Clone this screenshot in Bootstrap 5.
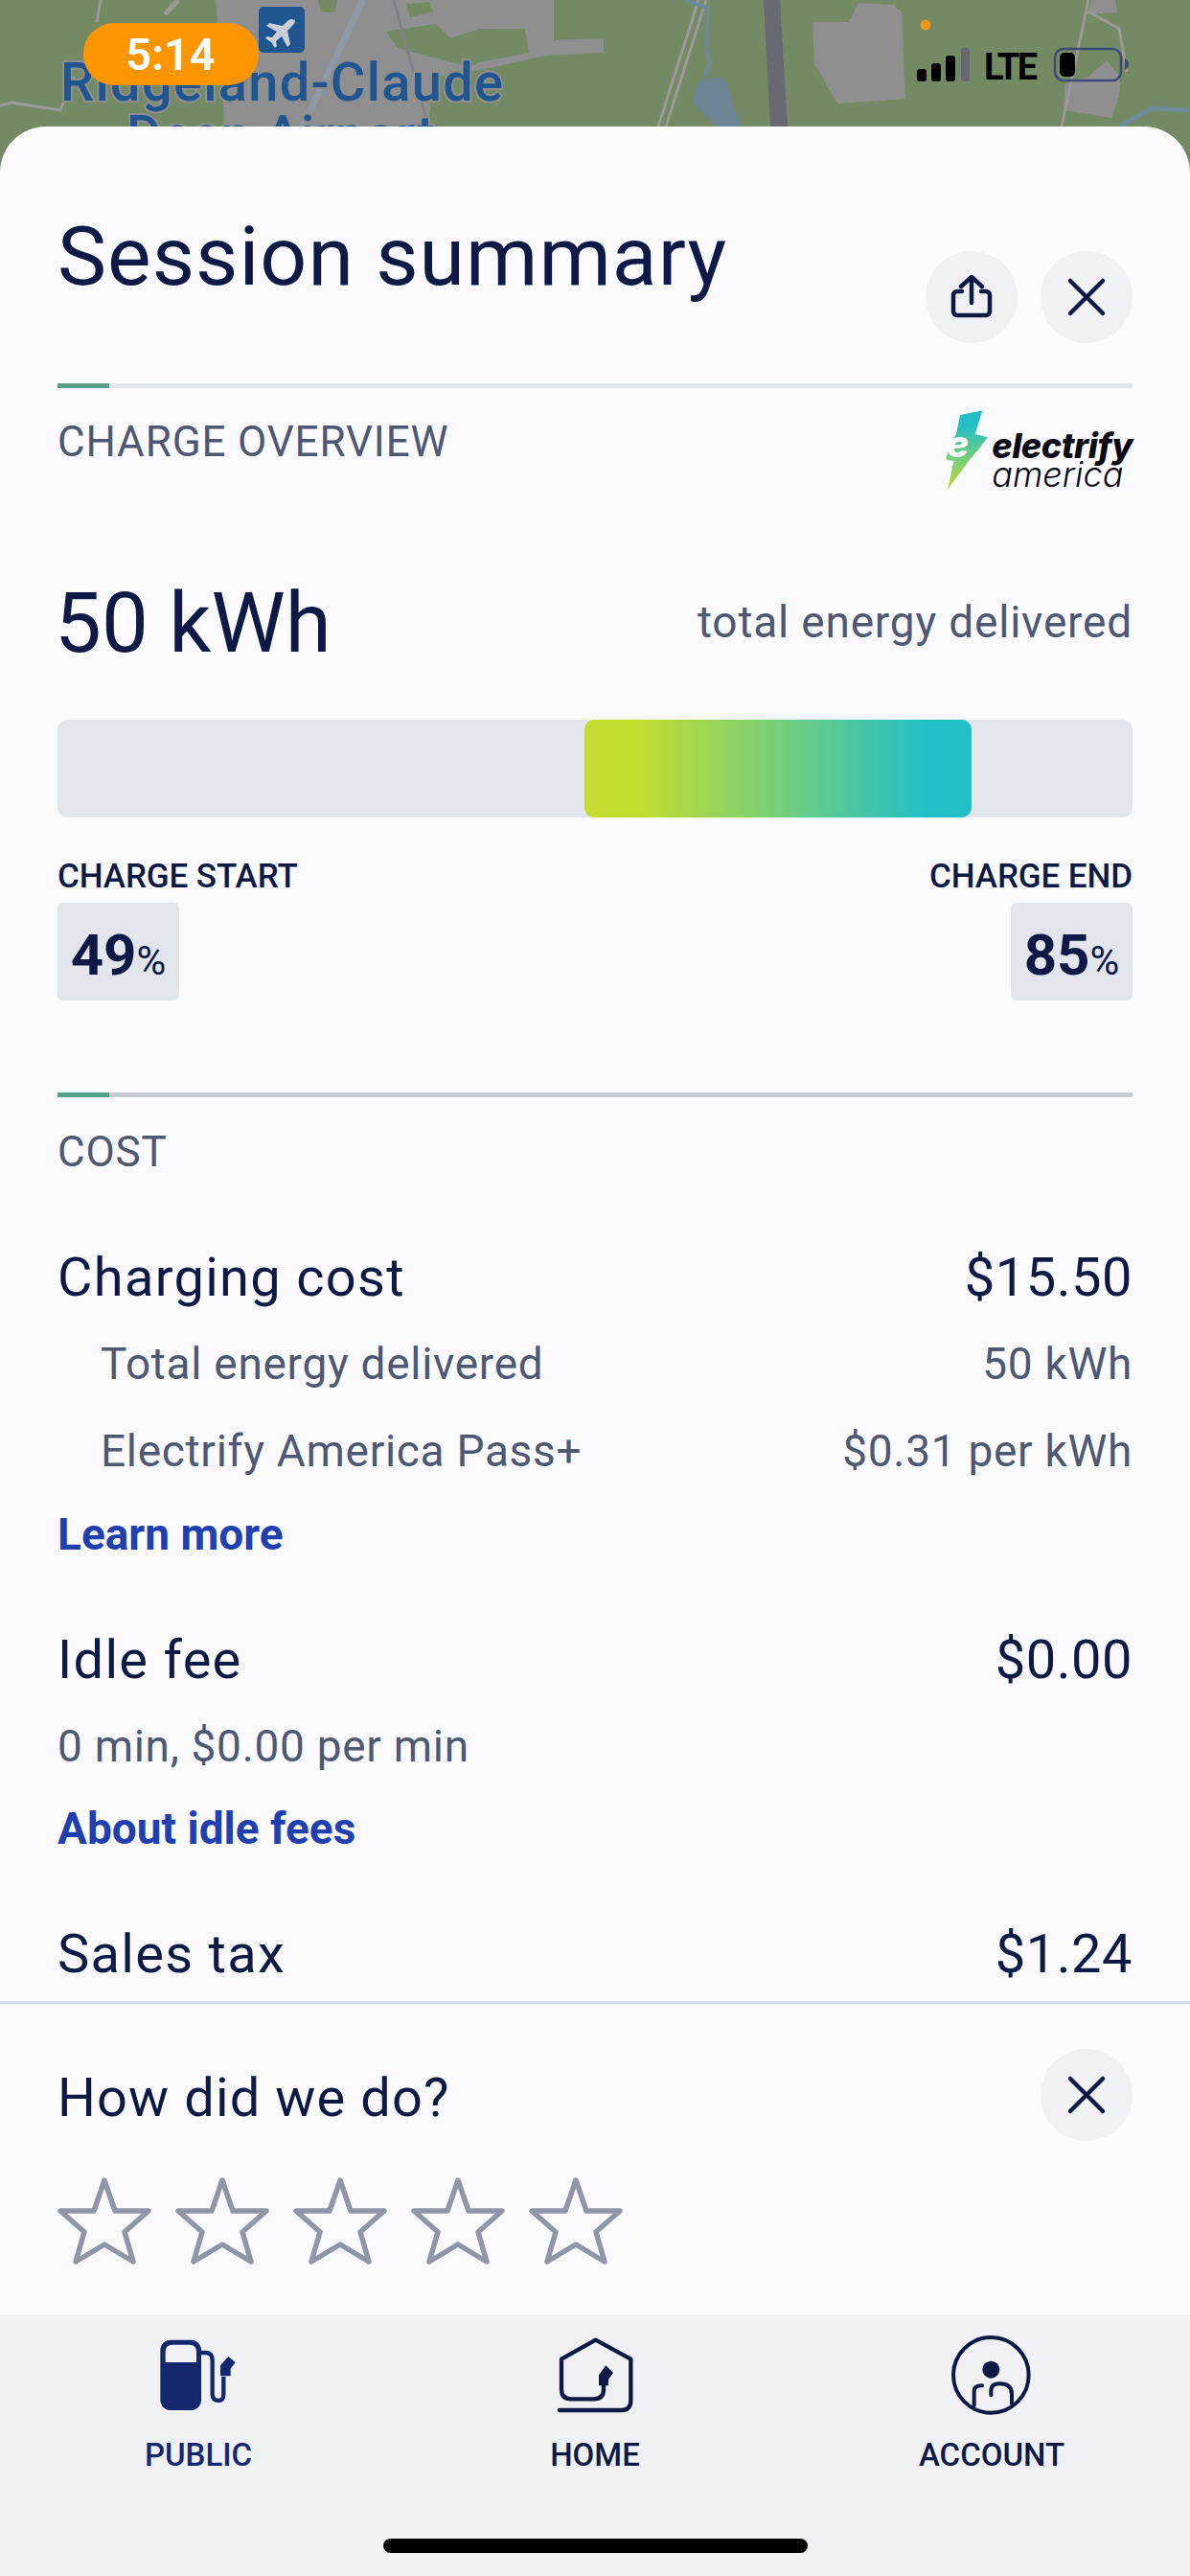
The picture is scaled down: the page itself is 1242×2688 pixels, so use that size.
<!DOCTYPE html>
<html lang="en">
<head>
  <meta charset="UTF-8">
  <title>Session summary</title>
  <link href="https://cdn.jsdelivr.net/npm/bootstrap@5.3.2/dist/css/bootstrap.min.css" rel="stylesheet">
  <style>
    html, body { margin: 0; background: #f0f1f4; }
    .phone { width: 1242px; height: 2688px; overflow: hidden; font-family: Roboto, "Liberation Sans", sans-serif; color: #0e1a45; background: #748a64; }
    .map-art { position: absolute; left: 0; top: 0; }
    .status-overlay { position: absolute; left: 0; top: 0; }
    .sheet { margin-top: 132px; background: #fbfbff; border-radius: 48px 48px 0 0; flex: 1 1 auto; min-height: 0; z-index: 1; }
    .scroll-part { height: 1956px; overflow: hidden; padding: 0 60px; }
    .head-row { height: 268px; }
    .page-title { font-size: 86px; line-height: 100px; padding-top: 86px; margin: 0; font-weight: 400; letter-spacing: 1px; }
    .head-btns { padding-top: 130px; gap: 24px; }
    .round-btn { width: 96px; height: 96px; border-radius: 50%; background: #f0f1f4; border: 0; padding: 0; }
    .rule-row { height: 5px; background: #e2e5ec; }
    .rule-row.darker { background: #c6cbd6; }
    .rule-tick { width: 54px; background: #5aa088; }
    .section-cap { font-size: 44px; line-height: 112px; color: #4f5873; letter-spacing: .85px; }
    .cost-cap { line-height: 114px; }
    .overview-row { height: 106px; }
    .ea-logo { margin-top: 23px; gap: 4px; }
    .ea-name { font-family: Inter, sans-serif; font-size: 36px; line-height: 36px; font-weight: 800; font-style: italic; color: #0a0a14; letter-spacing: -.5px; padding-top: 3px; }
    .ea-sub { font-family: Inter, sans-serif; font-size: 36px; line-height: 24px; font-weight: 300; font-style: italic; color: #0a0a14; }
    .energy-row { margin-top: 89px; line-height: 100px; }
    .energy-val { font-size: 87px; margin-left: -3px; }
    .energy-note { font-size: 46px; line-height: 98px; color: #4f5873; letter-spacing: .8px; }
    .charge-bar { height: 102px; margin-top: 51px; background: #e2e5ec; border-radius: 10px; }
    .charge-fill { border-radius: 10px; background: linear-gradient(90deg, #c3dc30 14%, #24bfc6 88%); }
    .charge-labels { margin-top: 42px; font-size: 35px; line-height: 40px; font-weight: 500; letter-spacing: -.1px; }
    .charge-boxes { margin-top: 7px; margin-bottom: 96px; }
    .pct-box { width: 127px; height: 102px; background: #e2e5ec; border-radius: 6px; font-size: 60px; font-weight: 700; line-height: 110px; text-align: center; white-space: nowrap; }
    .pct-box span { font-size: 42px; font-weight: 400; }
    .cost-main { font-size: 56px; line-height: 80px; letter-spacing: .5px; margin-top: 56px; }
    .cost-main.first-cost { margin-top: 34px; }
    .cost-main span:first-child { letter-spacing: 1.3px; }
    .cost-sub { font-size: 46px; line-height: 70px; color: #4f5873; letter-spacing: .7px; margin-top: 15px; }
    .cost-sub.indent { padding-left: 45px; }
    .cost-sub.wider-gap { margin-top: 21px; }
    .cost-link { display: block; font-size: 46px; line-height: 70px; font-weight: 700; color: #2040b0; text-decoration: none; margin-top: 16px; }
    .cost-sub.indent + .cost-link { margin-top: 17px; }
    .rating-part { border-top: 3px solid #d8ddee; padding: 47px 60px 0; height: 327px; }
    .rating-title { font-size: 56px; letter-spacing: 1.1px; margin-top: 6px; }
    .star-row { margin-top: 37px; gap: 25px; }
    .tab-bar { background: #f0f1f4; height: 273px; padding-top: 15px; }
    .tab-label { font-size: 33px; line-height: 40px; font-weight: 500; margin-top: 12px; }
    .tab-label.active-tab { color: #14276f; }
    .home-pill { width: 443px; height: 15px; border-radius: 8px; background: #000; margin: 67px auto 0; }
  </style>
</head>
<body>

<div class="phone position-relative d-flex flex-column">

  <!-- map behind the sheet -->
  <svg class="map-art" width="1242" height="190" viewBox="0 0 1242 190">
    <rect width="1242" height="190" fill="#748a64"/>
    <polygon points="225,0 578,0 578,42 630,40 630,55 570,58 507,72 451,80 443,190 238,190 233,113 230,60" fill="#8f8f90"/>
    <polygon points="403,33 455,25 470,40 500,30 548,30 552,55 500,65 490,70 415,50" fill="#748a64"/>
    <polygon points="332,0 352,0 350,13 335,12" fill="#748a64"/>
    <polygon points="424,4 448,2 452,12 428,18" fill="#748a64"/>
    <polygon points="848,23 886,23 896,3 933,5 941,13 945,103 874,108 858,80 850,67" fill="#8f8f90"/>
    <polygon points="1140,0 1164,0 1166,13 1134,15" fill="#8f8f90"/>
    <polygon points="1112,87 1136,80 1155,63 1169,80 1168,100 1160,123 1110,115" fill="#8f8f90"/>
    <polygon points="723,107 729,85 751,80 759,87 773,132 747,132" fill="#6f8494"/>
    <polygon points="797,0 814,0 822,132 804,132" fill="#676a73"/>
    <g fill="none" stroke="#9a9a9a" stroke-width="3">
      <path d="M737 0 695 132M729 0 687 132"/>
      <path d="M1136 0 1108 132M1136 12 1168 30 1176 75"/>
      <path d="M105 0 101 23M0 110 12 107 63 115 77 80"/>
    </g>
    <path d="M186 0 172 15" stroke="#9a9a9a" stroke-width="5" fill="none"/>
    <path d="M379 0 316 132" stroke="#8d9aa5" stroke-width="7" fill="none"/>
    <path d="M411 0 447 132" stroke="#7f8186" stroke-width="3" fill="none"/>
    <path d="M715 0 739 8 737 50 741 66 735 80" stroke="#6b8a95" stroke-width="4" fill="none"/>
    <path d="M1168 132 1203 113 1242 115" stroke="#6b8a95" stroke-width="5" fill="none"/>
    <rect x="270" y="7" width="48" height="48" rx="5" fill="#20558f"/>
    <path d="M307 21c-2-2-5-1-7 1l-5 5-14-3-3 3 11 6-5 6-5-1-2 2 6 4 4 6 2-2-1-5 6-5 6 11 3-3-3-14 5-5c2-2 4-5 2-7z" fill="#c9cdd5"/>
    <g font-family="Roboto, sans-serif" font-weight="500" font-size="56" fill="#20558f" stroke="#8f8f90" stroke-width="4" paint-order="stroke">
      <text x="63" y="105" textLength="462">Ridgeland-Claude</text>
      <text x="132" y="160" textLength="322">Deen Airport</text>
    </g>
  </svg>

  <!-- status bar drawn over the map -->
  <svg class="status-overlay" width="1242" height="132" viewBox="0 0 1242 132">
    <rect x="87" y="24" width="183" height="65" rx="32" fill="#fb9500"/>
    <text x="178" y="73" text-anchor="middle" font-family="Roboto, sans-serif" font-weight="600" font-size="47" fill="#fff">5:14</text>
    <circle cx="966" cy="26" r="5.5" fill="#e8951c"/>
    <rect x="957" y="72" width="10" height="13" rx="3"/>
    <rect x="972" y="66" width="10" height="19" rx="3"/>
    <rect x="987" y="58" width="10" height="27" rx="3"/>
    <rect x="1003" y="50" width="9" height="35" rx="3" fill="#666a70"/>
    <text x="1027" y="83" font-family="Roboto, sans-serif" font-weight="700" font-size="38" textLength="56">LTE</text>
    <rect x="1101" y="51" width="69" height="33" rx="9" fill="none" stroke="#3d4a75" stroke-width="2.5"/>
    <rect x="1106" y="55" width="16" height="25" rx="5"/>
    <path d="M1174 61c3 1 4 4 4 6s-1 5-4 6z" fill="#3d4a75"/>
  </svg>

  <div class="sheet position-relative d-flex flex-column">
    <div class="scroll-part">
      <div class="head-row d-flex justify-content-between align-items-start">
        <h1 class="page-title">Session summary</h1>
        <div class="head-btns d-flex">
          <button class="round-btn" type="button" aria-label="Share">
            <svg width="96" height="96" viewBox="0 0 96 96" fill="none" stroke="#0e1a45" stroke-width="4.5" stroke-linecap="round" stroke-linejoin="round">
              <path d="M38 42H33a4 4 0 0 0-4 4V63a4 4 0 0 0 4 4H63a4 4 0 0 0 4-4V46a4 4 0 0 0-4-4H58"/>
              <path d="M48 54V27M37 37 48 27 59 37"/>
            </svg>
          </button>
          <button class="round-btn" type="button" aria-label="Close">
            <svg width="96" height="96" viewBox="0 0 96 96" fill="none" stroke="#0e1a45" stroke-width="4.5" stroke-linecap="round">
              <path d="M31 31 65 65M65 31 31 65"/>
            </svg>
          </button>
        </div>
      </div>

      <div class="rule-row d-flex"><div class="rule-tick"></div></div>
      <div class="overview-row d-flex justify-content-between align-items-start">
        <div class="section-cap">CHARGE OVERVIEW</div>
        <div class="ea-logo d-flex">
          <svg width="44" height="83" viewBox="252 595 133 250">
            <defs>
              <linearGradient id="boltGrad" x1="0" y1="0" x2="0" y2="1">
                <stop offset="0.2" stop-color="#24bfc6"/>
                <stop offset="1" stop-color="#c3dc30"/>
              </linearGradient>
            </defs>
            <polygon points="298,610 368,595 345,670 385,680 350,725 325,755 258,845 278,755 252,750 272,690 285,670" fill="url(#boltGrad)"/>
            <text x="255" y="742" font-family="Inter, sans-serif" font-weight="800" font-style="italic" font-size="118" fill="#fbfbff">e</text>
          </svg>
          <div class="pt-3">
            <div class="ea-name">electrify</div>
            <div class="ea-sub">america</div>
          </div>
        </div>
      </div>

      <div class="energy-row d-flex justify-content-between">
        <div class="energy-val">50 kWh</div>
        <div class="energy-note">total energy delivered</div>
      </div>

      <div class="charge-bar d-flex">
        <div class="charge-fill" style="margin-left: 49%; width: 36%;"></div>
      </div>
      <div class="charge-labels d-flex justify-content-between">
        <div>CHARGE START</div>
        <div>CHARGE END</div>
      </div>
      <div class="charge-boxes d-flex justify-content-between">
        <div class="pct-box">49<span>%</span></div>
        <div class="pct-box">85<span>%</span></div>
      </div>

      <div class="rule-row darker d-flex"><div class="rule-tick"></div></div>
      <div class="section-cap cost-cap">COST</div>

      <div class="cost-main first-cost d-flex justify-content-between"><span>Charging cost</span><span>$15.50</span></div>
      <div class="cost-sub indent d-flex justify-content-between"><span>Total energy delivered</span><span>50 kWh</span></div>
      <div class="cost-sub wider-gap indent d-flex justify-content-between"><span>Electrify America Pass+</span><span>$0.31 per kWh</span></div>
      <a class="cost-link" href="#">Learn more</a>

      <div class="cost-main d-flex justify-content-between"><span>Idle fee</span><span>$0.00</span></div>
      <div class="cost-sub">0 min, $0.00 per min</div>
      <a class="cost-link" href="#">About idle fees</a>

      <div class="cost-main d-flex justify-content-between"><span>Sales tax</span><span>$1.24</span></div>
    </div>

    <div class="rating-part">
      <div class="d-flex justify-content-between align-items-center">
        <div class="rating-title">How did we do?</div>
        <button class="round-btn" type="button" aria-label="Dismiss">
          <svg width="96" height="96" viewBox="0 0 96 96" fill="none" stroke="#0e1a45" stroke-width="4.5" stroke-linecap="round">
            <path d="M31 31 65 65M65 31 31 65"/>
          </svg>
        </button>
      </div>
      <div class="star-row d-flex" id="stars"></div>
    </div>

    <div class="tab-bar">
      <div class="row g-0 text-center">
        <div class="col-4">
          <svg width="110" height="100" viewBox="6 0 330 300" fill="none">
            <rect x="52" y="35" width="128" height="220" rx="32" fill="#14276f"/>
            <path d="M68 105V72Q68 50 90 50H143Q165 50 165 72V105z" fill="#f0f1f4"/>
            <path d="M180 75H195Q215 75 215 100V205Q215 225 235 225Q250 225 250 205V150" stroke="#14276f" stroke-width="13"/>
            <polygon points="240,115 265,87 287,105 272,125 272,148 240,148" fill="#14276f"/>
          </svg>
          <div class="tab-label active-tab">PUBLIC</div>
        </div>
        <div class="col-4">
          <svg width="110" height="100" viewBox="-12 0 330 300" fill="none">
            <path d="M42 255H235Q265 255 265 225V95L155 35 48 95V190Q48 220 78 220H150Q180 220 180 190V175" stroke="#0e1a45" stroke-width="13" stroke-linecap="round" stroke-linejoin="round"/>
            <polygon points="165,145 187,115 210,138 195,158 195,178 165,178" fill="#0e1a45"/>
          </svg>
          <div class="tab-label">HOME</div>
        </div>
        <div class="col-4">
          <svg width="110" height="100" viewBox="0 0 330 300" fill="none" stroke="#0e1a45" stroke-width="12" stroke-linecap="round">
            <circle cx="163" cy="145" r="118"/>
            <circle cx="163" cy="128" r="27" fill="#0e1a45" stroke="none"/>
            <path d="M110 240V195Q110 178 135 178"/>
            <path d="M163 208V195Q163 172 190 172Q228 172 228 205V235"/>
          </svg>
          <div class="tab-label">ACCOUNT</div>
        </div>
      </div>
      <div class="home-pill"></div>
    </div>
  </div>
</div>

<script>
  // five empty rating stars
  const starBox = document.getElementById('stars');
  for (let i = 0; i < 5; i++) {
    starBox.innerHTML += `
      <svg width="98" height="93" viewBox="0 0 98 93" fill="none" stroke="#9096a8" stroke-width="5.5" stroke-linejoin="round">
        <polygon points="49,4 60,36 95,36 70,58 79,89 49,71 19,89 28,58 3,36 38,36"/>
      </svg>`;
  }
</script>
<script src="https://cdn.jsdelivr.net/npm/bootstrap@5.3.2/dist/js/bootstrap.bundle.min.js"></script>
</body>
</html>
